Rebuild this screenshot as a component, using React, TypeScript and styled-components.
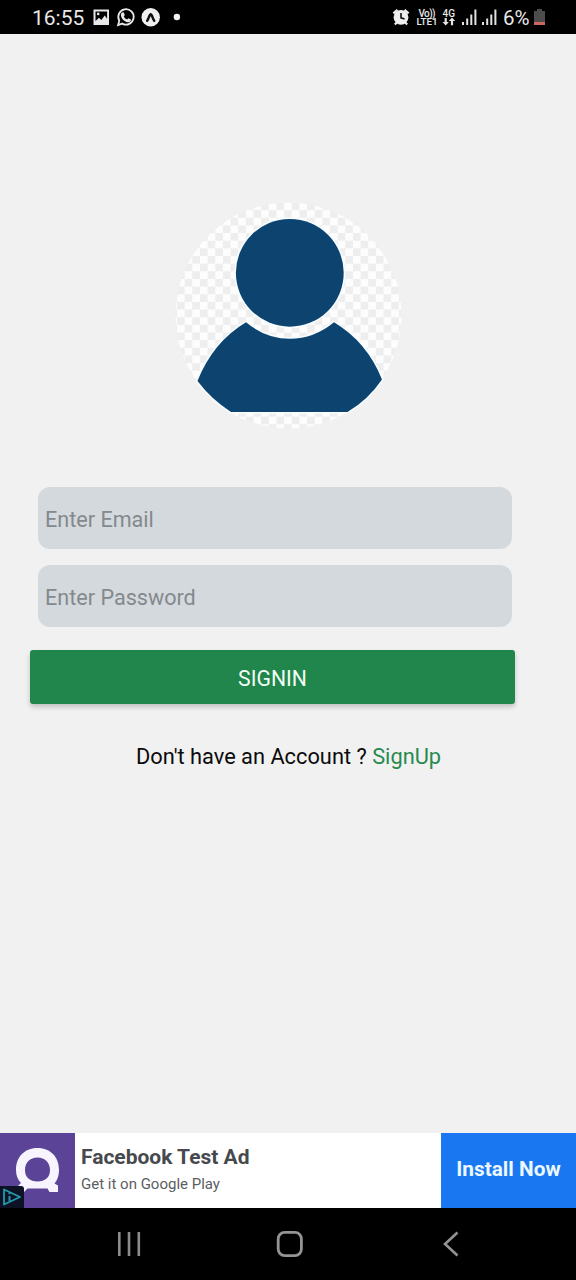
import React from "react";
import styled, { createGlobalStyle } from "styled-components";

const GlobalStyle = createGlobalStyle`
  * { box-sizing: border-box; }
  body { margin: 0; background: #f1f1f1; font-family: Roboto, "Liberation Sans", sans-serif; }
`;

const Screen = styled.div`
  width: 576px;
  height: 1280px;
  display: flex;
  flex-direction: column;
  background: #f1f1f1;
  overflow: hidden;
`;

const StatusBar = styled.header`
  height: 34px;
  flex: none;
  display: flex;
  justify-content: space-between;
  align-items: center;
  padding: 0 29px 0 32px;
  background: #000;
  color: #e8e8e8;
`;

const StatusGroup = styled.div`
  display: flex;
  align-items: center;
  height: 34px;
`;

const StatusText = styled.span<{ $width: number; $size: number; $indent?: number }>`
  width: ${(p) => p.$width}px;
  padding-left: ${(p) => p.$indent ?? 0}px;
  font-size: ${(p) => p.$size}px;
  line-height: 34px;
  padding-top: 1px;
  white-space: nowrap;
`;

const Glyph = styled.svg`
  display: block;
  flex: none;
`;

const Main = styled.main`
  flex: 1;
  display: flex;
  flex-direction: column;
  padding: 168px 61px 0 30px;
`;

const Avatar = styled(Glyph)`
  margin-left: 145px;
`;

const Form = styled.form`
  display: flex;
  flex-direction: column;
  padding-top: 57px;
`;

const Field = styled.input`
  height: 62px;
  width: 474px;
  margin: 0 0 16px 8px;
  padding: 2px 7px 0;
  border: 0;
  border-radius: 12px;
  background: #d4d9dd;
  font: 400 21.6px Roboto, sans-serif;
  color: #222;
  outline: none;
  &::placeholder { color: #84898d; opacity: 1; }
`;

const SubmitButton = styled.button`
  height: 54px;
  width: 485px;
  margin-top: 7px;
  padding: 2px 0 0;
  border: 0;
  border-radius: 3px;
  background: #20864b;
  color: #f2fff6;
  font: 400 21.2px Roboto, sans-serif;
  box-shadow: 0 3px 5px rgba(0, 0, 0, 0.2);
`;

const SignupLine = styled.p`
  margin: 38px 0 0 106px;
  font-size: 21.8px;
  line-height: 30px;
  color: #0b0b0b;
  white-space: nowrap;
`;

const SignupLink = styled.span`
  color: #268a4f;
`;

const AdBanner = styled.aside`
  height: 75px;
  flex: none;
  display: flex;
  background: #fff;
`;

const AdCopy = styled.div`
  flex: 1;
  padding: 9px 0 0 6px;
`;

const AdTitle = styled.div`
  font-size: 21px;
  font-weight: 700;
  line-height: 30px;
  color: #46494d;
`;

const AdSubtitle = styled.div`
  font-size: 15px;
  line-height: 24px;
  color: #5b5e62;
`;

const InstallButton = styled.button`
  width: 135px;
  border: 0;
  padding: 0 0 3px;
  background: #1977f2;
  color: #ecf8ff;
  font: 700 20.8px Roboto, sans-serif;
  white-space: nowrap;
`;

const NavBar = styled.nav`
  height: 72px;
  flex: none;
  display: flex;
  align-items: center;
  padding-left: 116px;
  background: #000;
`;

const HomeIcon = styled(Glyph)`
  margin: 0 138px 0 134px;
`;

const NotificationIcons = () => (
  <Glyph width="96" height="34" viewBox="90 0 96 34">
    <path fill="#e8e8e8" fillRule="evenodd" d="M93.500 9.500H109v15.500H93.500zM95.500 11.500v9.400l3.500-3.200 2.400 2.200 3.300-4.400 2.400 3.200v-7.200zM98.200 12.600a1.300 1.300 0 1 1 0 2.600 1.300 1.300 0 0 1 0-2.600z" />
    <path fill="none" stroke="#e8e8e8" strokeWidth="1.800" d="M118.100 25l1.200-4.300a7.700 7.700 0 1 1 2.900 2.900z" />
    <path fill="#e8e8e8" d="M122.100 12.400l1.500-.2 1.200 2.800-1 1.400c.8 1.500 1.800 2.500 3.300 3.200l1.200-1.300 2.700 1.300c0 2-1.400 3-3.100 2.700-4.100-.7-7-4.200-7-7.600 0-.9.4-1.700 1.200-2.300z" />
    <circle cx="150.700" cy="17.300" r="9.200" fill="#f0f0f0" />
    <path fill="none" stroke="#111" strokeWidth="2.500" strokeLinecap="round" strokeLinejoin="round" d="M147.200 20.800c1.300-1.500 2.200-6.500 3.500-6.500s2.200 5 3.500 6.500" />
    <circle cx="176.900" cy="17" r="3.200" fill="#f3f3f3" />
  </Glyph>
);

const SystemIcons = () => (
  <Glyph width="108" height="34" viewBox="392 0 108 34">
    <g fill="none" stroke="#eee" strokeWidth="2.200">
      <path d="M393.400 13.400l4-3.600M404.600 9.800l4 3.600M396.800 22.500l-2 2M405.200 22.500l2 2" />
    </g>
    <circle cx="401" cy="17.300" r="7.400" fill="#f0f0f0" />
    <path fill="none" stroke="#111" strokeWidth="1.600" d="M401 13v4.800l3.600 1.200" />
    <g fill="#e8e8e8" fontFamily="Roboto, sans-serif" fontWeight="500">
      <text x="418.500" y="16.500" fontSize="10" textLength="17">Vo))</text>
      <text x="416.500" y="25" fontSize="9.800" textLength="21">LTE1</text>
      <text x="442.500" y="16.500" fontSize="10" textLength="12.500">4G</text>
    </g>
    <path fill="#e4e4e4" d="M445.700 25.500l-3.200-3.500h2.100v-4h2.200v4h2.100zM452 17.500l3.200 3.500h-2.100v4.200h-2.200V21h-2.100z" />
    {[462, 482].map((x) => (
      <g key={x} fill="#e2e2e2">
        <rect x={x} y="22" width="2" height="3" />
        <rect x={x + 4.2} y="18.500" width="2" height="6.500" />
        <rect x={x + 8.3} y="14.500" width="2" height="10.500" />
        <rect x={x + 12.4} y="9.500" width="2" height="15.500" />
      </g>
    ))}
  </Glyph>
);

const BatteryIcon = () => (
  <Glyph width="14" height="34" viewBox="533 0 14 34">
    <path fill="#4d4b4b" d="M534 11h3V9h5v2h3v11h-11z" />
    <rect x="534" y="22" width="11" height="3" fill="#c9685c" />
  </Glyph>
);

const AvatarPicture = () => (
  <Avatar width="228" height="228" viewBox="175 202 228 228">
    <defs>
      <pattern id="checks" x="192.300" y="256" width="15.300" height="15.300" patternUnits="userSpaceOnUse">
        <rect width="15.300" height="15.300" fill="#fdfdfd" />
        <rect width="7.650" height="7.650" fill="#eeeeee" />
        <rect x="7.650" y="7.650" width="7.650" height="7.650" fill="#eeeeee" />
      </pattern>
    </defs>
    <circle cx="288.500" cy="315.500" r="113" fill="url(#checks)" />
    <g fill="#0d446f" stroke="#f8fdff" strokeWidth="3" paintOrder="stroke">
      <circle cx="289.800" cy="272.800" r="53.900" />
      <path d="M246 322.300Q213 342 197.500 381Q211 399 231 412H347.500Q368 400 382 379.500Q367 342 334 322.300Q314 338.800 290 338.800Q266 338.800 246 322.300z" />
    </g>
  </Avatar>
);

const AdLogo = () => (
  <Glyph width="75" height="75" viewBox="0 0 75 75">
    <rect width="75" height="75" fill="#5b4397" />
    <path fill="#f7f4fd" fillRule="evenodd" d="M37.500 15C51 15 59 24.500 59 37c0 5.500-1.500 10-4.500 13.500L58 52.500V59H49.500L47.500 55.500H27.500L24 59H17V54l4-4C17.500 46.500 16 42 16 37 16 24.500 24 15 37.500 15zM37.500 24.500C30 24.500 25 29.500 25 37s5 11.500 12.500 11.500S50 44.500 50 37 45 24.500 37.500 24.500z" />
    <path fill="#0e1225" d="M0 53h21q3 0 3 3v19H0z" />
    <path fill="none" stroke="#239aae" strokeWidth="1.800" strokeLinejoin="round" d="M4 56.500v15L20 64z" />
    <path fill="none" stroke="#239aae" strokeWidth="2" d="M9.500 59.500v1.800M9.500 63v5" />
  </Glyph>
);

export default function App() {
  return (
    <Screen>
      <GlobalStyle />
      <StatusBar>
        <StatusGroup>
          <StatusText $width={58} $size={21}>16:55</StatusText>
          <NotificationIcons />
        </StatusGroup>
        <StatusGroup>
          <SystemIcons />
          <StatusText $width={33} $size={20.5} $indent={3}>6%</StatusText>
          <BatteryIcon />
        </StatusGroup>
      </StatusBar>
      <Main>
        <AvatarPicture />
        <Form>
          <Field type="email" placeholder="Enter Email" />
          <Field type="password" placeholder="Enter Password" />
          <SubmitButton type="button">SIGNIN</SubmitButton>
        </Form>
        <SignupLine>
          Don't have an Account ? <SignupLink>SignUp</SignupLink>
        </SignupLine>
      </Main>
      <AdBanner>
        <AdLogo />
        <AdCopy>
          <AdTitle>Facebook Test Ad</AdTitle>
          <AdSubtitle>Get it on Google Play</AdSubtitle>
        </AdCopy>
        <InstallButton>Install Now</InstallButton>
      </AdBanner>
      <NavBar>
        <Glyph width="26" height="26" viewBox="0 0 26 26" stroke="#8c8c8c" strokeWidth="2.600">
          <path d="M3.300 1v24M13 1v24M22.800 1v24" />
        </Glyph>
        <HomeIcon width="28" height="28" viewBox="0 0 28 28" fill="none" stroke="#949494" strokeWidth="2.800">
          <rect x="2.200" y="2.400" width="23.200" height="23.200" rx="6.500" />
        </HomeIcon>
        <Glyph width="18" height="28" viewBox="0 0 18 28" fill="none" stroke="#949494" strokeWidth="2.600">
          <path d="M15.500 2.500L3 14l12.500 11.500" />
        </Glyph>
      </NavBar>
    </Screen>
  );
}
